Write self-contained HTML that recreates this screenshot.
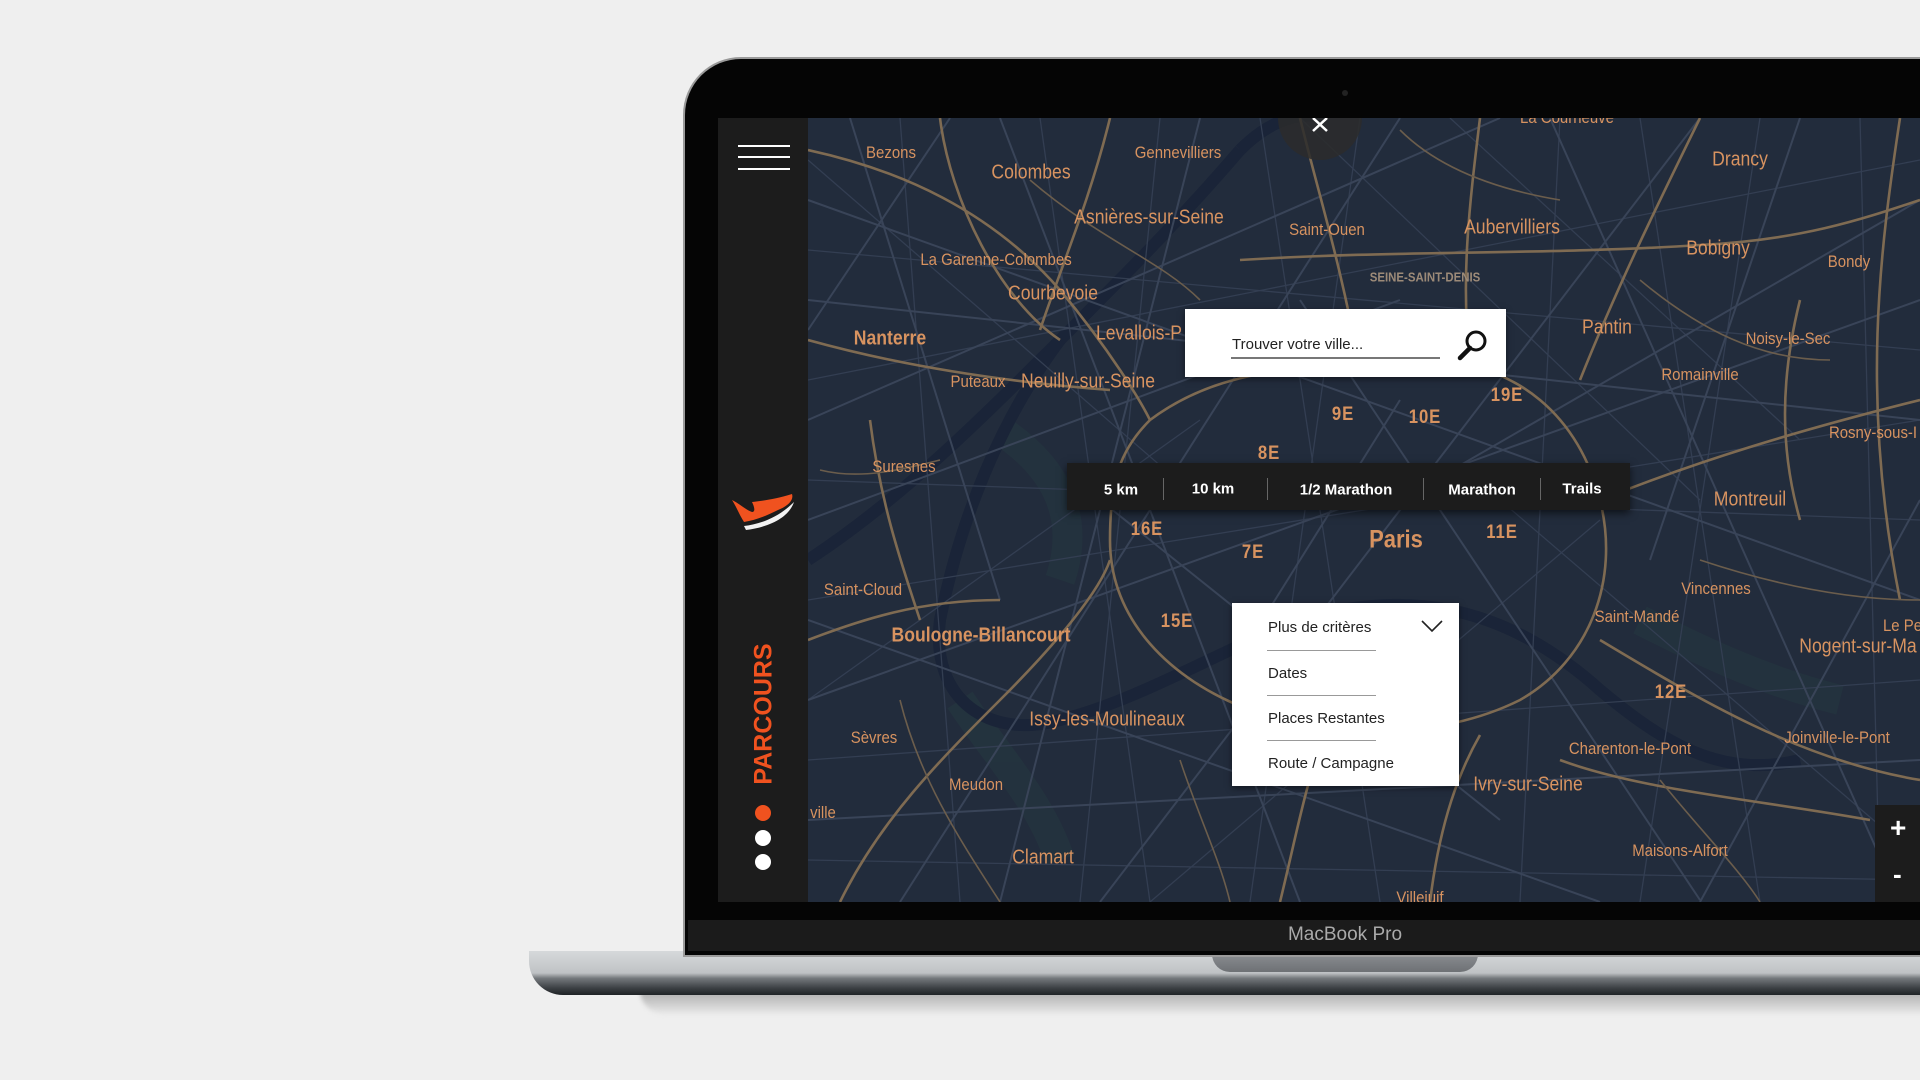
<!DOCTYPE html>
<html><head><meta charset="utf-8">
<style>
*{margin:0;padding:0;box-sizing:border-box}
body{width:1920px;height:1080px;background:#efefef;position:relative;overflow:hidden;font-family:"Liberation Sans",sans-serif}
.abs{position:absolute}
#lid{left:683px;top:57px;width:1300px;height:900px;background:#050505;border-radius:58px 0 0 0;border:2px solid #9a9a9a;border-right:none}
#chin{left:688px;top:920px;width:1240px;height:31px;background:#1b1b1b}
#mb{left:1225px;top:924px;width:240px;text-align:center;color:#aaa;font-size:19px}
#base{left:529px;top:951px;width:1400px;height:44px;background:linear-gradient(#d6d9db 0%,#bfc2c5 50%,#74787c 62%,#3a3e42 85%,#1f2326 100%);border-radius:0 0 0 34px}
#shadow{left:640px;top:990px;width:1290px;height:24px;background:linear-gradient(#a9a9a9,#e9e9e9);border-radius:0 0 0 30px;filter:blur(2px)}
#notch{left:1212px;top:951px;width:266px;height:21px;background:linear-gradient(#8e9195,#6e7175);border-radius:0 0 18px 18px}
#side{left:718px;top:118px;width:90px;height:784px;background:#1c1c1c}
#map{left:808px;top:118px;width:1112px;height:784px;overflow:hidden;background:#222c3c}
#inner{position:absolute;left:-808px;top:-118px;width:1920px;height:1080px}
.l{position:absolute;color:#d89360;white-space:nowrap;transform:translate(-50%,-50%) scaleX(.88);font-size:17px}
.b{font-size:20px}.s{font-size:15px}.d{font-weight:bold;font-size:19px;letter-spacing:1px}
.g{color:#9c8a78;font-size:13px;font-weight:bold}
.w{position:absolute;color:#fff;font-weight:bold;font-size:15px;transform:translate(-50%,-50%);white-space:nowrap}
</style></head><body>
<div id="shadow" class="abs"></div>
<div id="base" class="abs"></div>
<div id="notch" class="abs"></div>
<div id="lid" class="abs"></div>
<div id="chin" class="abs"></div>
<div id="mb" class="abs">MacBook Pro</div>
<div class="abs" style="left:1342px;top:90px;width:6px;height:6px;border-radius:50%;background:#222"></div>

<div id="side" class="abs">
 <div class="abs" style="left:20px;top:27px;width:52px;height:2px;background:#fff"></div>
 <div class="abs" style="left:20px;top:38px;width:52px;height:2px;background:#fff"></div>
 <div class="abs" style="left:20px;top:50px;width:52px;height:2px;background:#fff"></div>
 <svg class="abs" style="left:12px;top:370px" width="66" height="50" viewBox="0 0 66 50">
  <path d="M2 12 C10 16 16 22 22 24 C26 24 24 18 22 14 C32 13 46 11 62 6 C64 12 58 18 48 22 C36 28 26 32 14 34 C10 28 6 18 2 12Z" fill="#f0521f"/>
  <path d="M14 38 C30 36 48 30 64 14 C60 26 46 38 16 42Z" fill="#f2f2f2"/>
 </svg>
 <div class="abs" style="left:32px;top:531px;width:28px;height:130px;"><div style="position:absolute;left:50%;top:50%;transform:translate(-50%,-50%) rotate(-90deg);color:#f0521f;font-weight:bold;font-size:25px;white-space:nowrap">PARCOURS</div></div>
 <div class="abs" style="left:37px;top:687px;width:16px;height:16px;border-radius:50%;background:#f0521f"></div>
 <div class="abs" style="left:37px;top:712px;width:16px;height:16px;border-radius:50%;background:#fff"></div>
 <div class="abs" style="left:37px;top:736px;width:16px;height:16px;border-radius:50%;background:#fff"></div>
</div>

<div id="map" class="abs"><div id="inner">
<svg width="1920" height="1080" style="position:absolute;left:0;top:0">
 <g fill="none" stroke="#2f5a4a" stroke-width="30" opacity=".15">
  <path d="M1000 430 C1060 470 1080 520 1060 580"/><path d="M960 700 C1000 760 1040 800 1060 860"/><path d="M1640 620 C1700 650 1760 680 1840 700"/>
 </g>
 <g fill="none" stroke="#1a2438" stroke-width="12">
  <path d="M808 560 C900 500 980 420 1060 340 C1120 280 1180 220 1240 150"/>
  <path d="M1240 150 C1270 120 1300 110 1330 118"/>
  <path d="M1060 340 C1000 420 960 520 940 620 C930 700 990 740 1060 720 C1140 700 1220 650 1300 620 C1400 590 1500 600 1600 690 C1660 740 1720 780 1800 760"/>
 </g>
 <g fill="none" stroke="#333e52" stroke-width="1.3">
  <path d="M808 250 L1920 350"/><path d="M808 380 L1920 160"/><path d="M808 480 L1920 520"/><path d="M808 600 L1920 420"/><path d="M808 760 L1920 680"/><path d="M808 860 L1920 880"/><path d="M900 118 L960 902"/><path d="M1040 118 L1150 902"/><path d="M1160 118 L1080 902"/><path d="M1260 118 L1380 902"/><path d="M1360 118 L1250 902"/><path d="M1560 118 L1520 902"/><path d="M1640 118 L1760 902"/><path d="M1760 118 L1640 902"/><path d="M1860 118 L1880 902"/><path d="M808 160 L1200 500"/><path d="M1300 118 L1700 500"/><path d="M1500 500 L1920 860"/><path d="M808 700 L1200 420"/><path d="M1150 902 L1600 520"/><path d="M1450 118 L1800 440"/>
 </g>
 <g fill="none" stroke="#394458" stroke-width="2">
  <path d="M808 200 L1920 600"/><path d="M808 420 L1500 118"/><path d="M900 902 L1400 118"/><path d="M808 700 L1920 300"/><path d="M1100 902 L1700 118"/><path d="M808 820 L1920 760"/><path d="M1000 118 L1300 902"/><path d="M1550 118 L1900 902"/><path d="M808 300 L1920 420"/><path d="M1200 118 L1000 902"/><path d="M808 620 L1600 902"/><path d="M1700 902 L1920 500"/><path d="M850 118 L1000 600"/><path d="M1400 500 L1920 200"/><path d="M808 520 L1400 300"/><path d="M1300 300 L1700 900"/><path d="M1100 500 L1500 820"/><path d="M950 118 L808 330"/><path d="M1800 118 L1650 560"/><path d="M1400 400 L1250 640"/>
 </g>
 <g fill="none" stroke="#7f6b52" stroke-width="2.6">
  <path d="M1150 420 C1230 360 1320 370 1420 360 C1520 360 1580 420 1600 500 C1620 580 1590 660 1520 700 C1440 740 1330 740 1250 710 C1170 680 1110 620 1110 540 C1110 480 1120 450 1150 420Z"/>
  <path d="M808 150 C900 170 990 210 1060 290 C1110 350 1140 400 1150 420"/>
  <path d="M1240 260 C1400 250 1550 255 1700 245 C1800 240 1860 220 1920 200"/>
  <path d="M1600 500 C1700 460 1800 430 1920 400"/>
  <path d="M808 340 C880 360 980 380 1110 390"/>
  <path d="M1600 640 C1700 700 1800 760 1920 780"/>
  <path d="M1280 902 C1300 820 1310 760 1330 730"/>
  <path d="M1430 902 C1440 820 1460 770 1480 735"/>
  <path d="M840 902 C880 820 940 760 1000 700 C1060 640 1100 590 1110 560"/>
  <path d="M1300 118 C1320 200 1340 260 1360 370"/>
  <path d="M1480 118 C1470 200 1460 280 1470 360"/>
  <path d="M1700 118 C1660 200 1620 280 1580 380"/>
  <path d="M1900 118 C1880 250 1860 400 1900 600"/>
  <path d="M808 640 C860 620 920 600 1000 600"/>
  <path d="M940 118 C950 200 1000 300 1060 340"/>
  <path d="M1110 118 C1090 200 1060 270 1040 330"/>
  <path d="M1560 760 C1640 790 1760 800 1870 820"/>
  <path d="M1800 300 C1780 380 1780 450 1800 520"/>
  <path d="M870 420 C880 500 900 560 920 620"/>
 </g>
 <g fill="none" stroke="#6b5d4c" stroke-width="1.6">
  <path d="M1030 180 C1100 240 1160 260 1200 300"/><path d="M1640 280 C1700 330 1760 360 1830 360"/><path d="M1700 560 C1760 580 1840 600 1920 600"/><path d="M900 700 C920 780 960 840 1000 902"/><path d="M1180 760 C1200 820 1220 860 1230 902"/><path d="M1660 780 C1700 830 1740 870 1760 902"/><path d="M1400 130 C1440 170 1500 190 1560 200"/><path d="M820 470 C860 480 900 470 940 460"/>
 </g>
 <circle cx="1320" cy="118" r="42" fill="#2b2b2b" opacity=".85"/>
 <path d="M1313 118 L1327 131 M1327 118 L1313 131" stroke="#fff" stroke-width="2.5"/>
</svg>
<div class="l" style="left:1567px;top:118px">La Courneuve</div>
<div class="l" style="left:891px;top:153px">Bezons</div>
<div class="l b" style="left:1031px;top:173px">Colombes</div>
<div class="l" style="left:1178px;top:153px">Gennevilliers</div>
<div class="l b" style="left:1149px;top:218px">Asnières-sur-Seine</div>
<div class="l" style="left:1327px;top:230px">Saint-Ouen</div>
<div class="l b" style="left:1512px;top:228px">Aubervilliers</div>
<div class="l b" style="left:1740px;top:160px">Drancy</div>
<div class="l b" style="left:1718px;top:249px">Bobigny</div>
<div class="l" style="left:1849px;top:262px">Bondy</div>
<div class="l" style="left:996px;top:260px">La Garenne-Colombes</div>
<div class="l g" style="left:1425px;top:277px">SEINE-SAINT-DENIS</div>
<div class="l b" style="left:1053px;top:294px">Courbevoie</div>
<div class="l b" style="left:890px;top:339px;font-weight:bold">Nanterre</div>
<div class="l b" style="left:1139px;top:334px">Levallois-P</div>
<div class="l b" style="left:1607px;top:328px">Pantin</div>
<div class="l" style="left:1788px;top:339px">Noisy-le-Sec</div>
<div class="l" style="left:978px;top:382px">Puteaux</div>
<div class="l b" style="left:1088px;top:382px">Neuilly-sur-Seine</div>
<div class="l" style="left:1700px;top:375px">Romainville</div>
<div class="l d" style="left:1507px;top:396px">19E</div>
<div class="l d" style="left:1343px;top:415px">9E</div>
<div class="l d" style="left:1425px;top:418px">10E</div>
<div class="l" style="left:1873px;top:433px">Rosny-sous-I</div>
<div class="l d" style="left:1269px;top:454px">8E</div>
<div class="l" style="left:904px;top:467px">Suresnes</div>
<div class="l b" style="left:1750px;top:500px">Montreuil</div>
<div class="l d" style="left:1147px;top:530px">16E</div>
<div class="l b" style="left:1396px;top:540px;font-size:25px;font-weight:bold">Paris</div>
<div class="l d" style="left:1502px;top:533px">11E</div>
<div class="l d" style="left:1253px;top:553px">7E</div>
<div class="l" style="left:863px;top:590px">Saint-Cloud</div>
<div class="l" style="left:1716px;top:589px">Vincennes</div>
<div class="l" style="left:1637px;top:617px">Saint-Mandé</div>
<div class="l b" style="left:981px;top:636px;font-weight:bold">Boulogne-Billancourt</div>
<div class="l d" style="left:1177px;top:622px">15E</div>
<div class="l" style="left:1905px;top:626px">Le Per</div>
<div class="l b" style="left:1858px;top:647px">Nogent-sur-Ma</div>
<div class="l d" style="left:1671px;top:693px">12E</div>
<div class="l b" style="left:1107px;top:720px">Issy-les-Moulineaux</div>
<div class="l" style="left:874px;top:738px">Sèvres</div>
<div class="l" style="left:1630px;top:749px">Charenton-le-Pont</div>
<div class="l" style="left:1837px;top:738px">Joinville-le-Pont</div>
<div class="l" style="left:976px;top:785px">Meudon</div>
<div class="l b" style="left:1528px;top:785px">Ivry-sur-Seine</div>
<div class="l" style="left:823px;top:813px">ville</div>
<div class="l" style="left:1680px;top:851px">Maisons-Alfort</div>
<div class="l b" style="left:1043px;top:858px">Clamart</div>
<div class="l" style="left:1420px;top:898px">Villejuif</div>

<div class="abs" style="left:1185px;top:309px;width:321px;height:68px;background:#fff;box-shadow:0 2px 6px rgba(0,0,0,.5)"></div>
<div class="abs" style="left:1232px;top:336px;font-size:15px;color:#222">Trouver votre ville...</div>
<div class="abs" style="left:1231px;top:357px;width:209px;height:2px;background:#777"></div>
<svg class="abs" style="left:1456px;top:328px" width="34" height="34" viewBox="0 0 34 34">
 <circle cx="20" cy="13" r="9" fill="none" stroke="#111" stroke-width="3"/>
 <path d="M14 20 L4 30" stroke="#111" stroke-width="4.5" stroke-linecap="round"/>
</svg>

<div class="abs" style="left:1067px;top:463px;width:563px;height:47px;background:#1c1c1c;box-shadow:0 3px 8px rgba(0,0,0,.6)"></div>
<div class="w" style="left:1121px;top:490px">5 km</div>
<div class="w" style="left:1213px;top:489px">10 km</div>
<div class="w" style="left:1346px;top:490px">1/2 Marathon</div>
<div class="w" style="left:1482px;top:490px">Marathon</div>
<div class="w" style="left:1582px;top:489px">Trails</div>
<div class="abs" style="left:1163px;top:478px;width:1px;height:22px;background:#666"></div>
<div class="abs" style="left:1267px;top:478px;width:1px;height:22px;background:#666"></div>
<div class="abs" style="left:1423px;top:478px;width:1px;height:22px;background:#666"></div>
<div class="abs" style="left:1540px;top:478px;width:1px;height:22px;background:#666"></div>

<div class="abs" style="left:1232px;top:603px;width:227px;height:183px;background:#fff;box-shadow:0 2px 6px rgba(0,0,0,.5)"></div>
<div class="abs" style="left:1268px;top:619px;font-size:15px;color:#222">Plus de critères</div>
<svg class="abs" style="left:1420px;top:618px" width="24" height="16"><path d="M2 3 L12 13 L22 3" fill="none" stroke="#222" stroke-width="1.6"/></svg>
<div class="abs" style="left:1267px;top:650px;width:109px;height:1px;background:#999"></div>
<div class="abs" style="left:1268px;top:665px;font-size:15px;color:#222">Dates</div>
<div class="abs" style="left:1267px;top:695px;width:109px;height:1px;background:#999"></div>
<div class="abs" style="left:1268px;top:710px;font-size:15px;color:#222">Places Restantes</div>
<div class="abs" style="left:1267px;top:740px;width:109px;height:1px;background:#999"></div>
<div class="abs" style="left:1268px;top:755px;font-size:15px;color:#222">Route / Campagne</div>

<div class="abs" style="left:1875px;top:805px;width:50px;height:97px;background:#1c1c1c"></div>
<div class="abs" style="left:1890px;top:812px;color:#fff;font-size:28px;font-weight:bold">+</div>
<div class="abs" style="left:1893px;top:859px;color:#fff;font-size:26px;font-weight:bold">-</div>
</div></div>
</body></html>
